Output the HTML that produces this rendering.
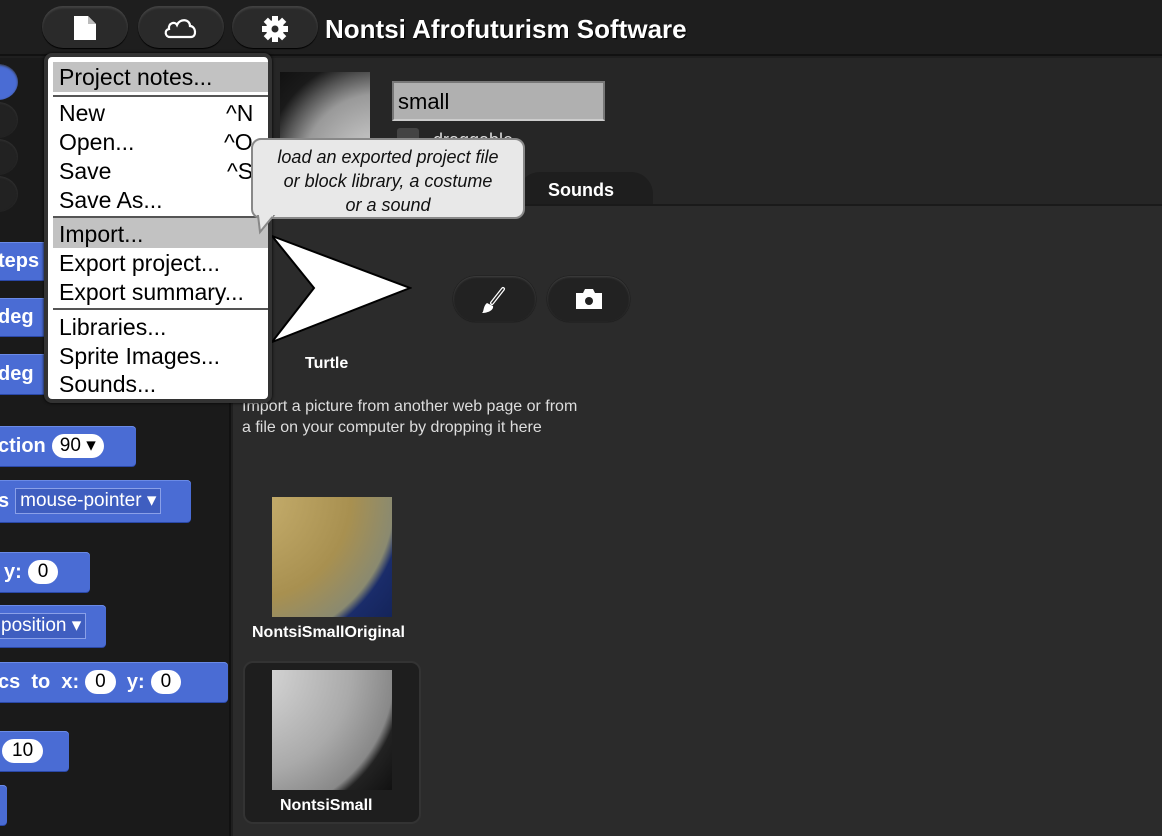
<!DOCTYPE html>
<html><head><meta charset="utf-8"><style>
*{margin:0;padding:0;box-sizing:border-box}
body{width:1162px;height:836px;overflow:hidden;background:#1f1f1f;font-family:"Liberation Sans",sans-serif;position:relative}
.abs{position:absolute}
.topbar{left:0;top:0;width:1162px;height:56px;background:#1e1e1e;border-bottom:2px solid #111}
.btn{position:absolute;top:6px;height:42px;width:86px;border-radius:21px;background:#2a2a2a;box-shadow:inset 0 2px 2px #444,0 1px 1px #000}
.title{left:325px;top:14px;color:#fff;font-weight:bold;font-size:26px;text-shadow:1px 1px 1px #000}
.palette{left:0;top:58px;width:231px;height:778px;background:#1a1a1a;border-right:2px solid #111}
.right{left:233px;top:58px;width:929px;height:778px;background:#262626}
.pane{left:233px;top:205px;width:929px;height:631px;background:#2b2b2b}
.blk{position:absolute;background:#4a6cd4;border-radius:4px;color:#fff;font-weight:bold;font-size:20px;box-shadow:inset 0 1px 0 #6a8ae6,0 1px 0 #2a48a8;display:flex;align-items:center;white-space:nowrap}
.slot{background:#fff;color:#000;font-weight:normal;border-radius:12px;padding:0 10px;font-size:19px;height:24px;line-height:24px;margin-left:6px}
.dd{background:#3f5ec0;color:#fff;font-weight:normal;border:1px solid #8aa0e8;padding:0 4px;font-size:19px;height:26px;line-height:24px;margin-left:6px}
.menu{left:44px;top:53px;width:228px;height:350px;background:#fff;border:4px solid #333;border-radius:8px;box-shadow:0 0 3px #000}
.mi{position:absolute;left:11px;font-size:23px;color:#000}
.sep{position:absolute;left:5px;width:215px;height:2px;background:#555}
.hl{position:absolute;left:5px;width:215px;background:#c2c2c2}
.tip{left:251px;top:138px;width:274px;height:81px;background:#e8e8e8;border:2px solid #888;border-radius:10px;text-align:center;font-style:italic;font-size:18px;line-height:24px;padding-top:5px;color:#111}
.circ{position:absolute;width:40px;height:36px;border-radius:50%;background:#222;box-shadow:inset 0 1px 2px #333}
</style></head><body>
<div class="abs topbar"></div>
<div class="btn" style="left:42px"><svg style="position:absolute;left:31px;top:9px" width="24" height="26" viewBox="0 0 24 26"><path d="M1 1H15L23 9V25H1Z" fill="#fff"/><path d="M15 1V9H23" fill="#bbb"/></svg></div>
<div class="btn" style="left:138px"><svg style="position:absolute;left:25px;top:11px" width="36" height="22" viewBox="0 0 36 22"><path d="M7 20C2 20 1 13 6 12C5 6 12 4 14 8C17 1 27 2 27 9C33 9 34 20 28 20Z" fill="none" stroke="#fff" stroke-width="2.2"/></svg></div>
<div class="btn" style="left:232px"><svg style="position:absolute;left:29px;top:9px" width="28" height="28" viewBox="0 0 28 28"><g fill="#fff" transform="translate(14 14)"><circle r="9"/><g id="t"><rect x="-3" y="-13" width="6" height="7"/></g><use href="#t" transform="rotate(45)"/><use href="#t" transform="rotate(90)"/><use href="#t" transform="rotate(135)"/><use href="#t" transform="rotate(180)"/><use href="#t" transform="rotate(225)"/><use href="#t" transform="rotate(270)"/><use href="#t" transform="rotate(315)"/></g><circle cx="14" cy="14" r="3.5" fill="#2a2a2a"/></svg></div>
<div class="abs title">Nontsi Afrofuturism Software</div>

<div class="abs palette"></div>
<div class="circ" style="left:-22px;top:64px;background:#4a6cd4"></div>
<div class="circ" style="left:-22px;top:102px"></div>
<div class="circ" style="left:-22px;top:139px"></div>
<div class="circ" style="left:-22px;top:176px"></div>
<div class="blk" style="left:-10px;top:242px;width:60px;height:38px;padding-left:8px">teps</div>
<div class="blk" style="left:-10px;top:298px;width:60px;height:38px;padding-left:8px">deg</div>
<div class="blk" style="left:-10px;top:354px;width:60px;height:40px;padding-left:8px">deg</div>
<div class="blk" style="left:-10px;top:426px;width:146px;height:40px;padding-left:8px">ction<span class="slot" style="padding:0 8px">90 ▾</span></div>
<div class="blk" style="left:-10px;top:480px;width:201px;height:42px;padding-left:8px">s<span class="dd">mouse-pointer ▾</span></div>
<div class="blk" style="left:-10px;top:552px;width:100px;height:40px;padding-left:14px">y:<span class="slot">0</span></div>
<div class="blk" style="left:-10px;top:605px;width:116px;height:42px;padding-left:8px"><span class="dd" style="margin-left:0;padding-left:2px">position ▾</span></div>
<div class="blk" style="left:-10px;top:662px;width:238px;height:40px;padding-left:8px">cs&nbsp; to&nbsp; x:<span class="slot">0</span>&nbsp;&nbsp;y:<span class="slot">0</span></div>
<div class="blk" style="left:-10px;top:731px;width:79px;height:40px;padding-left:6px"><span class="slot">10</span></div>
<div class="blk" style="left:-10px;top:785px;width:17px;height:40px"></div>

<div class="abs right"></div>
<div class="abs pane"></div>
<div class="abs" style="left:280px;top:72px;width:90px;height:90px;background:radial-gradient(circle at 110% 110%,#ddd 0,#999 55%,#555 70%,#1a1a1a 82%,#111 100%)"></div>
<div class="abs" style="left:392px;top:81px;width:213px;height:40px;background:#b0b0b0;border:2px solid #777;border-bottom-color:#ccc;font-size:22px;padding:6px 4px;color:#000">small</div>
<div class="abs" style="left:397px;top:128px;width:22px;height:22px;background:#444;border-radius:3px"></div>
<div class="abs" style="left:433px;top:130px;color:#ddd;font-size:18px">draggable</div>
<div class="abs" style="left:518px;top:172px;width:135px;height:34px;background:#1e1e1e;border-radius:22px 22px 0 0;color:#fff;font-weight:bold;font-size:18px;padding:8px 0 0 30px">Sounds</div>
<div class="abs" style="left:233px;top:204px;width:929px;height:2px;background:#1a1a1a"></div>
<svg class="abs" style="left:262px;top:230px" width="150" height="118"><path d="M10 6L148 58L10 112L52 58Z" fill="#fff" stroke="#000" stroke-width="2"/></svg>
<div class="abs" style="left:453px;top:276px;width:83px;height:46px;border-radius:23px;background:#222;box-shadow:inset 0 1px 2px #444,0 0 1px #000"><svg style="position:absolute;left:26px;top:10px" width="30" height="28" viewBox="0 0 30 28"><path d="M24 3L13 17" stroke="#fff" stroke-width="4" stroke-linecap="round"/><path d="M24 3L13 17" stroke="#222" stroke-width="1.5" stroke-linecap="round"/><path d="M8 17C4 20 5 26 3 27C9 27 15 24 14 20Z" fill="#fff"/></svg></div>
<div class="abs" style="left:547px;top:276px;width:83px;height:46px;border-radius:23px;background:#222;box-shadow:inset 0 1px 2px #444,0 0 1px #000"><svg style="position:absolute;left:28px;top:11px" width="28" height="24" viewBox="0 0 28 24"><path d="M1 6H8L10 2H18L20 6H27V22H1Z" fill="#fff"/><circle cx="14" cy="14" r="4" fill="#222"/></svg></div>
<div class="abs" style="left:305px;top:355px;color:#fff;font-weight:bold;font-size:16px">Turtle</div>
<div class="abs" style="left:242px;top:396px;color:#ddd;font-size:16px;line-height:21px">Import a picture from another web page or from<br>a file on your computer by dropping it here</div>
<div class="abs" style="left:272px;top:497px;width:120px;height:120px;background:radial-gradient(circle at -20% 0%,#c9b170 0,#a89050 55%,#8a8a70 78%,#1a2c6a 83%,#14245a 100%)"></div>
<div class="abs" style="left:252px;top:624px;color:#fff;font-weight:bold;font-size:16px;width:160px;overflow:hidden;white-space:nowrap">NontsiSmallOriginal</div>
<div class="abs" style="left:243px;top:661px;width:178px;height:163px;border-radius:10px;background:#1e1e1e;border:2px solid #333"></div>
<div class="abs" style="left:272px;top:670px;width:120px;height:120px;background:radial-gradient(circle at -20% 0%,#ddd 0,#aaa 55%,#888 78%,#222 83%,#111 100%)"></div>
<div class="abs" style="left:280px;top:797px;color:#fff;font-weight:bold;font-size:16px">NontsiSmall</div>

<div class="abs menu">
<div class="hl" style="top:5px;height:30px"></div>
<div class="mi" style="top:7px">Project notes...</div>
<div class="sep" style="top:38px"></div>
<div class="mi" style="top:43px">New</div><div class="mi" style="top:43px;left:178px">^N</div>
<div class="mi" style="top:72px">Open...</div><div class="mi" style="top:72px;left:176px">^O</div>
<div class="mi" style="top:101px">Save</div><div class="mi" style="top:101px;left:179px">^S</div>
<div class="mi" style="top:130px">Save As...</div>
<div class="sep" style="top:159px"></div>
<div class="hl" style="top:161px;height:30px"></div>
<div class="mi" style="top:164px">Import...</div>
<div class="mi" style="top:193px">Export project...</div>
<div class="mi" style="top:222px">Export summary...</div>
<div class="sep" style="top:251px"></div>
<div class="mi" style="top:257px">Libraries...</div>
<div class="mi" style="top:286px">Sprite Images...</div>
<div class="mi" style="top:314px">Sounds...</div>
</div>
<div class="abs tip">load an exported project file<br>or block library, a costume<br>or a sound</div>
<svg class="abs" style="left:255px;top:215px" width="22" height="20"><path d="M3 0L5 17L19 0Z" fill="#e8e8e8" stroke="#888" stroke-width="2"/><path d="M4 0H18" stroke="#e8e8e8" stroke-width="3"/></svg>
</body></html>
